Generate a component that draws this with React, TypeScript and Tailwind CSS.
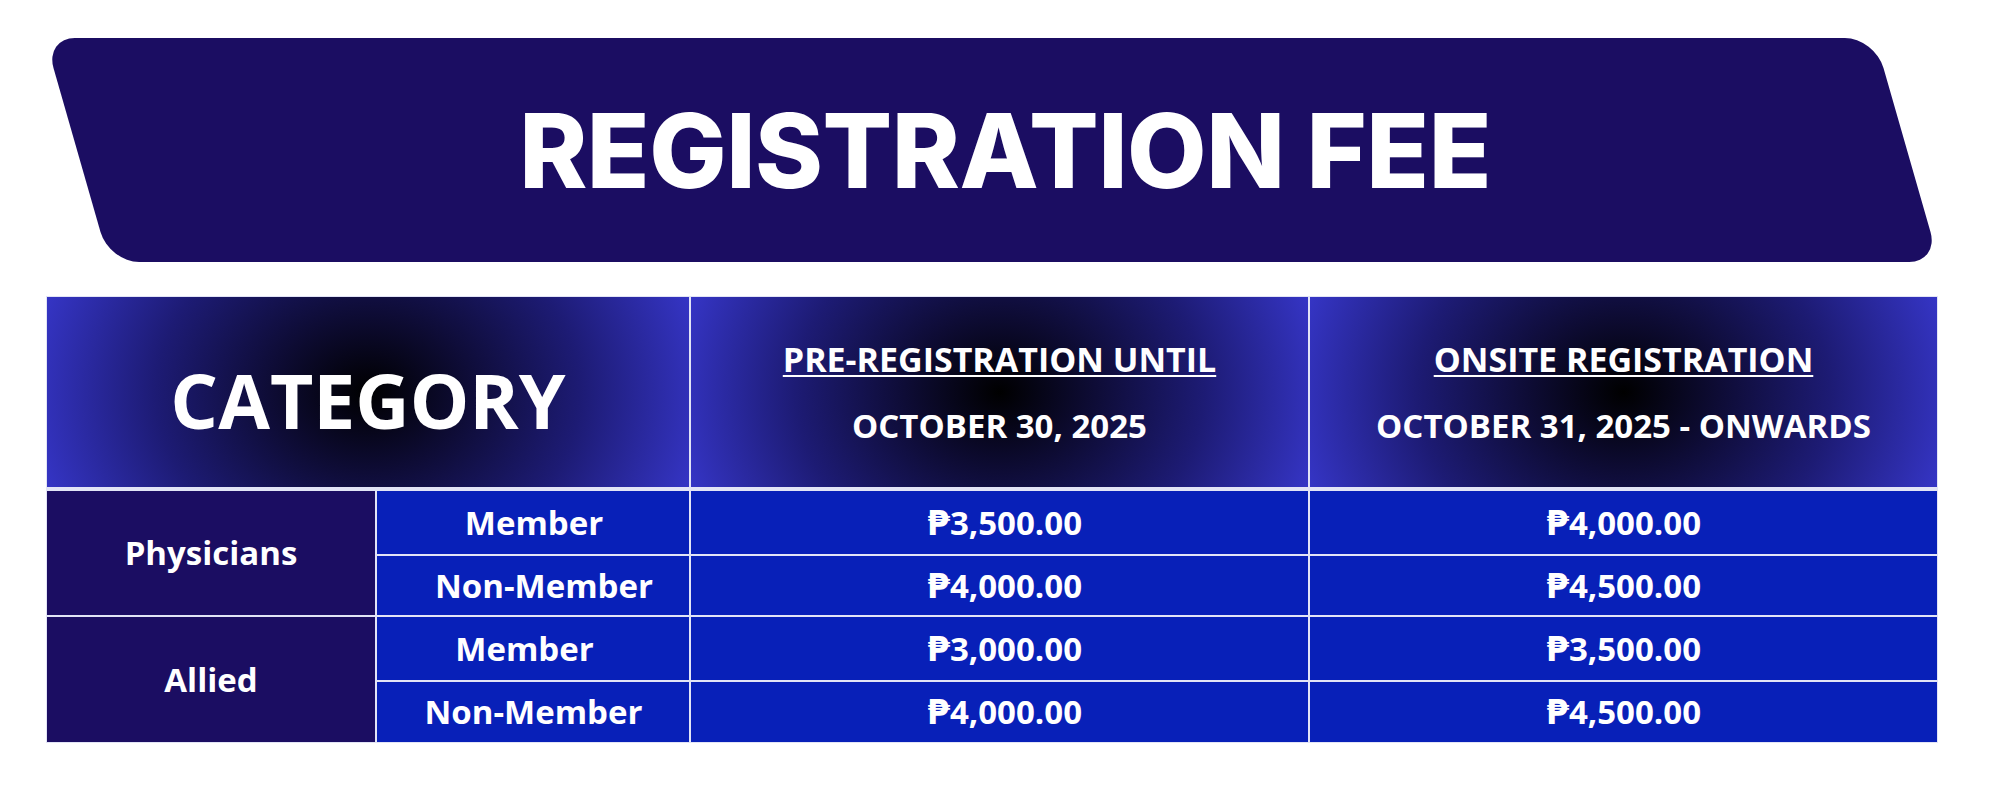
import React from "react";

const os = { fontFamily: '"Open Sans", "DejaVu Sans", sans-serif' };

export default function App() {
  const rows = [
    { sub: "Member", pre: "₱3,500.00", on: "₱4,000.00", h: "h-[63px]", sp: "pl-[2px]" },
    { sub: "Non-Member", pre: "₱4,000.00", on: "₱4,500.00", h: "h-[59px]", sp: "pl-[22px]" },
    { sub: "Member", pre: "₱3,000.00", on: "₱3,500.00", h: "h-[63px]", sp: "pr-[17px]" },
    { sub: "Non-Member", pre: "₱4,000.00", on: "₱4,500.00", h: "h-[60px]", sp: "pl-[1px]" },
  ];
  const hdrBg =
    "bg-[radial-gradient(ellipse_55%_150%_at_50%_50%,#000000_0%,#0e0c36_28%,#1d1b74_60%,#3737cc_100%)]";
  return (
    <div className="w-[2000px] h-[810px] bg-white flex flex-col" style={os}>
      <div className="mt-[38px] ml-[77px] w-[1830px] h-[224px] rounded-[30px] bg-[#1b0d62] skew-x-[16deg] flex items-center justify-center">
        <div
          className="-skew-x-[16deg] pl-[26px] text-white text-[103px] leading-none font-extrabold tracking-[-0.5px]"
          style={{ fontFamily: 'Inter, "Liberation Sans", sans-serif' }}
        >
          REGISTRATION FEE
        </div>
      </div>

      <div className="mt-[34px] ml-[46px] w-[1892px] bg-[#e2e4f6] p-[1px] flex flex-col gap-[4px] text-white font-bold">
        <div className="grid grid-cols-[642px_617px_627px] gap-[2px] h-[190px]">
          <div className={`${hdrBg} flex items-center justify-center pt-[16px] text-[75px] leading-none`}>
            CATEGORY
          </div>
          <div className={`${hdrBg} flex flex-col items-center justify-center gap-[27px] text-[34px] leading-[40px]`}>
            <div className="underline decoration-[2px] underline-offset-[3px]">PRE-REGISTRATION UNTIL</div>
            <div className="text-[33px]">OCTOBER 30, 2025</div>
          </div>
          <div className={`${hdrBg} flex flex-col items-center justify-center gap-[27px] text-[34px] leading-[40px]`}>
            <div className="underline decoration-[2px] underline-offset-[3px]">ONSITE REGISTRATION</div>
            <div className="text-[33px]">OCTOBER 31, 2025 - ONWARDS</div>
          </div>
        </div>

        <div className="grid grid-cols-[328px_312px_617px_627px] gap-[2px]">
          {[0, 1].map((g) => (
            <React.Fragment key={g}>
              <div className="row-span-2 bg-[#1b0d62] flex items-center justify-center text-[33px]">
                {g === 0 ? "Physicians" : "Allied"}
              </div>
              {[0, 1].map((k) => {
                const r = rows[g * 2 + k];
                return (
                  <React.Fragment key={k}>
                    <div className={`${r.h} ${r.sp} bg-[#0820b8] flex items-center justify-center text-[33px]`}>
                      {r.sub}
                    </div>
                    <div className="bg-[#0820b8] flex items-center justify-center text-[33px] pl-[10px]">{r.pre}</div>
                    <div className="bg-[#0820b8] flex items-center justify-center text-[33px]">{r.on}</div>
                  </React.Fragment>
                );
              })}
            </React.Fragment>
          ))}
        </div>
      </div>
    </div>
  );
}
